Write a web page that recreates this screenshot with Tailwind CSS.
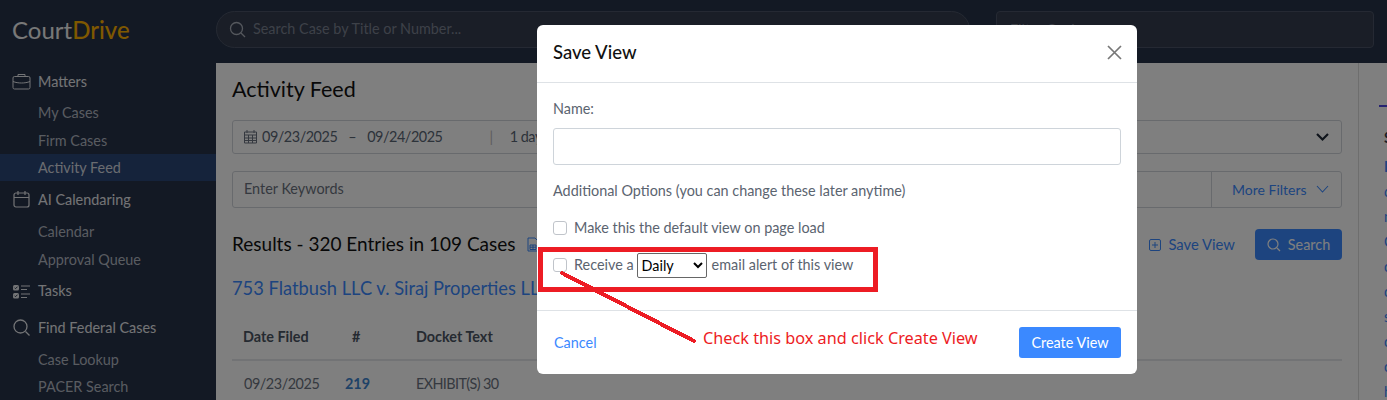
<!doctype html>
<html><head><meta charset="utf-8"><script src="https://cdn.jsdelivr.net/npm/@tailwindcss/browser@4"></script></head>
<body class="h-[400px] w-[1387px] overflow-hidden bg-white font-['Lato','Noto_Sans',sans-serif] text-[14.4px]">
<div class="relative flex h-[400px] w-[1387px] overflow-hidden">
  <aside class="flex h-[400px] w-[216px] shrink-0 flex-col bg-[#263248] text-[#d3d6dc]">
    <div class="flex h-[63px] shrink-0 items-center pb-[4px] pl-[12px] text-[24px] leading-none"><span class="text-[#f0f0f0]">Court</span><span class="font-medium text-[#ffb000]">Drive</span></div>
    <div class="flex h-[36px] items-center gap-[7px] pl-[12px] pt-[1px] text-[#e6e8ec]">
      <svg class="h-[19px] w-[19px]" viewBox="0 0 19 19" fill="none" stroke="currentColor" stroke-width="1"><rect x="1" y="4.500" width="17" height="12.500" rx="1.500"/><path d="M6 4.500V2.500h7v2M1 9.500c5 2 12 2 17 0"/></svg>Matters</div>
    <div class="flex h-[28px] items-center pl-[38px] text-[#b3b8c2]">My Cases</div>
    <div class="flex h-[28px] items-center pl-[38px] text-[#b3b8c2]">Firm Cases</div>
    <div class="flex h-[27px] items-center bg-[#2a4676] pl-[38px] text-[#d5d9e0]">Activity Feed</div>
    <div class="flex h-[36px] items-center gap-[7px] pl-[12px] pt-[1px] text-[#e6e8ec]">
      <svg class="h-[19px] w-[19px]" viewBox="0 0 19 19" fill="none" stroke="currentColor" stroke-width="1.200"><rect x="2" y="3" width="15" height="14" rx="2"/><path d="M2 7.500h15M6 1v4M13 1v4"/></svg>AI Calendaring</div>
    <div class="flex h-[28px] items-center pl-[38px] pt-[1px] text-[#b3b8c2]">Calendar</div>
    <div class="flex h-[28px] items-center pl-[38px] pt-[1px] text-[#b3b8c2]">Approval Queue</div>
    <div class="flex h-[36px] items-center gap-[7px] pl-[12px] pt-[1px] text-[#e6e8ec]">
      <svg class="h-[19px] w-[19px]" viewBox="0 0 19 19" fill="none"><rect x="1" y="3" width="6" height="5.500" rx="1.500" fill="currentColor"/><rect x="1" y="11" width="6" height="5.500" rx="1.500" fill="currentColor"/><path d="M2.500 5.700l1 1 2-2M2.500 13.700l1 1 2-2" stroke="#263248" stroke-width="1"/><path d="M9 4h9M9 7.500h6M9 12h9M9 15.500h6" stroke="currentColor" stroke-width="1.200"/></svg>Tasks</div>
    <div class="flex h-[38px] items-center gap-[7px] pl-[12px] pt-[1px] text-[#e6e8ec]">
      <svg class="h-[19px] w-[19px]" viewBox="0 0 19 19" fill="none" stroke="currentColor" stroke-width="1.300"><circle cx="8.500" cy="8.500" r="6.500"/><path d="M13.500 13.500l4 4"/></svg>Find Federal Cases</div>
    <div class="flex h-[27px] items-center pl-[38px] pt-[1px] text-[#b3b8c2]">Case Lookup</div>
    <div class="flex h-[27px] items-center pl-[38px] pt-[1px] text-[#b3b8c2]">PACER Search</div>
  </aside>
  <div class="flex min-w-0 flex-1 flex-col">
    <header class="flex h-[63px] shrink-0 items-start bg-[#263248] pr-[13px] pt-[11px]">
      <div class="flex h-[37px] w-[754px] items-center gap-[7px] rounded-full border border-[#4a5366] bg-[#343c4e] pb-[1px] pl-[12px] text-[#7b8291]">
        <svg class="h-[17px] w-[17px] text-[#aab0bb]" viewBox="0 0 17 17" fill="none" stroke="currentColor" stroke-width="1.300"><circle cx="7.500" cy="7.500" r="6"/><path d="M12 12l4 4"/></svg>Search Case by Title or Number...</div>
      <div class="ml-[26px] flex h-[37px] flex-1 items-center rounded-[4px] border border-[#4a5366] bg-[#343c4e] pl-[13px] text-[#7b8291]">Filter Options</div>
    </header>
    <div class="flex min-h-0 flex-1">
      <main class="w-[1143px] shrink-0 overflow-hidden border-r border-[#dcdcdc] pl-[16px] pr-[16px]">
        <h1 class="mt-[12px] h-[30px] text-[21.500px] leading-[28px] text-[#111]">Activity Feed</h1>
        <div class="mt-[15px] flex h-[34px] w-[1110px] items-center rounded-[3px] border border-[#d1d5db] pb-[1px] pl-[10px] pr-[12px] tracking-[-0.45px] text-[#5a6675]">
          <svg class="mr-[4px] h-[15px] w-[15px]" viewBox="0 0 15 15" fill="none" stroke="#6b7280"><path d="M1.500 3h12v11h-12zM4 1v3M11 1v3M1.500 6h12M1.500 9h12M1.500 11.500h12M5.500 6v8M9.500 6v8"/></svg>09/23/2025<span class="mx-[11px]">–</span>09/24/2025<span class="ml-[47px] text-[#bbb]">|</span><span class="ml-[17px]">1 day</span>
          <svg class="ml-auto h-[12px] w-[13px] text-[#1f2937]" viewBox="0 0 13 12" fill="none" stroke="currentColor" stroke-width="2.200"><path d="M1 3l5.500 5.500L12 3"/></svg></div>
        <div class="mt-[17px] flex h-[37px] w-[1110px] items-center rounded-[3px] border border-[#d1d5db]">
          <div class="flex-1 pb-[1px] pl-[11px] text-[#6b7280]">Enter Keywords</div>
          <div class="flex h-full w-[130px] items-center gap-[9px] border-l border-[#d1d5db] pb-[1px] pl-[20px] text-[14px] text-[#3b89ff]">More Filters<svg class="h-[10px] w-[13px]" viewBox="0 0 13 10" fill="none" stroke="currentColor" stroke-width="1.100"><path d="M1 2l5.500 6L12 2"/></svg></div>
        </div>
        <div class="mt-[21px] flex h-[31px] w-[1110px] items-center">
          <div class="text-[19px] text-[#111]">Results - 320 Entries in 109 Cases</div>
          <svg class="ml-[11px] h-[15px] w-[12px] text-[#3b89ff]" viewBox="0 0 12 15" fill="none" stroke="currentColor"><path d="M1 1h7l3 3v10H1zM3 8h6v4.500H3zM6 8v4.500M3 10.200h6"/></svg>
          <div class="ml-auto flex items-center gap-[7px] text-[14.800px] text-[#3b89ff]"><svg class="h-[12px] w-[12px]" viewBox="0 0 12 12" fill="none" stroke="currentColor"><rect x=".5" y=".5" width="11" height="11" rx="1.500"/><path d="M6 3v6M3 6h6"/></svg>Save View</div>
          <div class="ml-[20px] flex h-[31px] w-[87px] items-center justify-center gap-[7px] rounded-[4px] bg-[#3b89ff] text-white"><svg class="h-[14px] w-[14px]" viewBox="0 0 14 14" fill="none" stroke="currentColor" stroke-width="1.200"><circle cx="6" cy="6" r="5"/><path d="M10 10l3 3"/></svg>Search</div>
        </div>
        <div class="mt-[16px] h-[25px] text-[18.300px] leading-[25px] text-[#3b89ff]">753 Flatbush LLC v. Siraj Properties LLC</div>
        <div class="mt-[26px] flex h-[34px] w-[1110px] items-start border-b-2 border-[#e5e7eb] pl-[11px] font-bold leading-[20px] text-[#4b5563]">
          <div class="w-[109px]">Date Filed</div><div class="w-[64px]">#</div><div>Docket Text</div></div>
        <div class="mt-[13px] flex w-[1110px] pl-[11px] leading-[20px] text-[#6b7280]"><div class="w-[102px] pl-[1px] tracking-[-0.45px]">09/23/2025</div><div class="w-[71px] font-bold text-[#3f85cf]">219</div><div class="tracking-[-0.6px]">EXHIBIT(S) 30</div></div>
      </main>
      <div class="min-w-0 flex-1 overflow-hidden pl-[20px] pt-[42px] text-[#3b89ff]">
        <div class="h-[2px] w-[30px] bg-[#4f46e5]"></div>
        <div class="mt-[18px] pl-[5px] leading-[25px] whitespace-nowrap"><div class="font-bold text-[#374151]">Summary</div><div class="mt-[4px] font-bold">Entries</div><div>court</div><div>notice</div><div>Case</div><div>order</div><div>order</div><div>status</div><div>order</div><div>order</div><div>hearing</div></div>
      </div>
    </div>
  </div>
  <div class="absolute inset-0 bg-black/50"></div>
  <section class="absolute left-[537px] top-[25px] flex h-[349px] w-[600px] flex-col rounded-[6px] bg-white text-[#5b6470]">
    <div class="flex h-[58px] shrink-0 items-center justify-between border-b border-[#dee2e6] pb-[2px] pl-[16px] pr-[15px]">
      <h2 class="text-[18.500px] font-medium text-[#111]">Save View</h2>
      <svg class="h-[15px] w-[15px] text-[#777]" viewBox="0 0 15 15" fill="none" stroke="currentColor" stroke-width="1.700"><path d="M1 1l13 13M14 1L1 14"/></svg>
    </div>
    <div class="flex-1 px-[16px] pt-[16px]">
      <div class="h-[20px] leading-[20px]">Name:</div>
      <div class="mt-[9px] h-[37px] w-[568px] rounded-[3px] border border-[#ced4da] bg-white"></div>
      <div class="mt-[16px] h-[20px] leading-[20px]">Additional Options (you can change these later anytime)</div>
      <div class="mt-[17px] flex h-[20px] items-center gap-[7px]"><span class="h-[14px] w-[14px] rounded-[3px] border border-[#c0c4ca] bg-white"></span>Make this the default view on page load</div>
      <div class="mt-[15px] flex h-[24px] items-center"><span class="mr-[7px] h-[14px] w-[14px] rounded-[3px] border border-[#c0c4ca] bg-white"></span>Receive a
        <select class="ml-[3px] mr-[5px] h-[25px] w-[70px] rounded-[2px] border border-[#666] bg-white pl-0 text-[14.400px] text-black [appearance:auto]"><option>Daily</option></select>email alert of this view</div>
    </div>
    <div class="flex h-[64px] shrink-0 items-center justify-between border-t border-[#dee2e6] pl-[17px] pr-[16px]">
      <span class="text-[#3b89ff]">Cancel</span>
      <div class="flex h-[31px] w-[102px] items-center justify-center rounded-[3px] bg-[#3b89ff] text-white">Create View</div>
    </div>
  </section>
  <div class="absolute left-[538px] top-[247px] h-[45px] w-[340px] border-[5px] border-[#ed1c24]"></div>
  <svg class="absolute left-[550px] top-[265px] h-[85px] w-[155px]" viewBox="0 0 155 85" shape-rendering="crispEdges"><path d="M12 8L144 76" stroke="#ed1c24" stroke-width="4" stroke-linecap="round"/></svg>
  <div class="absolute left-[703px] top-[326px] font-['Noto_Sans',sans-serif] text-[16.250px] leading-[24px] text-[#ed1c24]">Check this box and click Create View</div>
</div>
</body></html>
